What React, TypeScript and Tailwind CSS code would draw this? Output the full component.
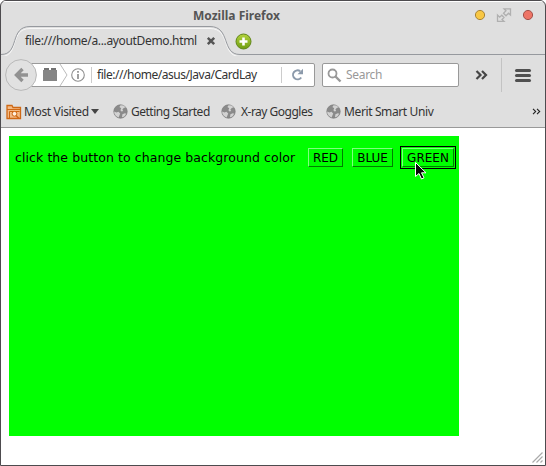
import React from 'react';

function Globe({ className }: { className: string }) {
  return (
    <svg className={`shrink-0 ${className}`} width="15" height="15" viewBox="0 0 15 15">
      <circle cx="7.5" cy="7.5" r="6.7" fill="#8a8a8a" stroke="#7c7c7c" strokeWidth="0.7" />
      <path d="M7.5 1.2 10.5 1.6 12.8 3.6 11 3.8 9.4 5.4 10.2 7 8.6 7.6 7.4 6.2 8.2 4.2 6.4 3Z" fill="#d2d2d2" />
      <path d="M1.2 7.5 3.5 8.4 5.4 7.8 7.2 9.4 6.4 11.6 5.6 13.4 3 12 1.4 9.6Z" fill="#d2d2d2" />
      <path d="M9.4 10.2 11.8 9.2 13.2 9.8 11.4 12.4 9 13.2Z" fill="#d2d2d2" />
    </svg>
  );
}

function AwtButton({ label, className }: { label: string; className: string }) {
  return (
    <button
      className={`flex h-[19px] items-center justify-center border border-t-[#80ff80] border-l-[#80ff80] border-r-[#008000] border-b-[#008000] bg-[#00ff00] pt-px text-[12px] leading-none whitespace-nowrap text-black ${className}`}
    >
      {label}
    </button>
  );
}

export default function App() {
  return (
    <div className="h-[466px] w-[546px] overflow-hidden bg-white font-['Noto_Sans',sans-serif] text-[12px] leading-[16px] text-[#333]">
      <div className="relative flex h-[466px] w-[546px] flex-col overflow-hidden rounded-t-[6px] border border-[#4d4b4e] bg-[#dfdfdf]">
        <header className="relative flex h-[24px] shrink-0 items-center border-t border-white">
          <span className="ml-[192px] mt-[5px] w-[88px] font-bold whitespace-nowrap text-[#555]">Mozilla Firefox</span>
          <svg className="mt-[4px] ml-[192px]" width="64" height="18" viewBox="0 0 64 18">
            <circle cx="7" cy="8" r="4.6" fill="#f8c744" stroke="#a88335" />
            <g fill="none" stroke="#b0b0b0" strokeWidth="1.3">
              <path d="M31 1.8H37.5V8L35.5 6.2 33 8.8 30.5 6.3 33 3.8Z" />
              <path d="M24.5 8V14.4H31L29 12.5 31 10.5 28.8 8.2 26.7 10.2Z" />
            </g>
            <circle cx="55" cy="8" r="4.6" fill="#ed7466" stroke="#a35048" />
          </svg>
        </header>

        <nav className="relative flex h-[31px] shrink-0 items-center">
          <svg className="absolute top-0 left-0" width="544" height="31" viewBox="0 0 544 31">
            <path d="M0 30.5C19 30.5 8 2.5 29 2.5H209C230 2.5 220 30.5 239 30.5H544" transform="translate(0 1)" fill="none" stroke="#f7f7f7" />
            <path d="M0 29.5C19 29.5 8 1.5 29 1.5H209C230 1.5 220 29.5 239 29.5H544" fill="none" stroke="#96999e" />
          </svg>
          <span className="relative ml-[24px] w-[174px] tracking-[-0.34px] whitespace-nowrap">file:///home/a...ayoutDemo.html</span>
          <svg className="relative mt-px ml-[7px]" width="10" height="10" viewBox="0 0 10 10">
            <path d="m1.8 1.8 6.4 6.4m0-6.4L1.8 8.2" stroke="#555" strokeWidth="2.5" />
          </svg>
          <svg className="relative mt-px ml-[19px]" width="17" height="17" viewBox="0 0 17 17">
            <defs>
              <linearGradient id="add" x2="0" y2="1"><stop stopColor="#b4d33d" /><stop offset="1" stopColor="#6f9d12" /></linearGradient>
            </defs>
            <circle cx="8.5" cy="8.5" r="7.5" fill="url(#add)" stroke="#61861b" />
            <path d="M8.5 4.5v8m-4-4h8" stroke="#fff" strokeWidth="2.6" />
          </svg>
        </nav>

        <div className="flex h-[40px] shrink-0 items-center pb-[2px]">
          <svg className="relative z-10 ml-[4px] shrink-0" width="32" height="34" viewBox="0 0 32 34">
            <circle cx="16" cy="17" r="15.4" fill="#e1e1e1" stroke="#b8b8b8" />
            <path d="M23 17H12m5.5-6L11.5 17l6 6" fill="none" stroke="#919191" strokeWidth="3.4" />
          </svg>
          <div className="ml-[-6px] flex h-[24px] w-[284px] shrink-0 items-center rounded-r-[2px] border border-[#999] bg-white">
            <svg className="shrink-0" width="62" height="22" viewBox="0 0 62 22">
              <path d="m28 0 7 11-7 11" fill="none" stroke="#bbb" />
              <path d="M11 6H25V17H11Z" fill="#858585" />
              <path d="M12 4h5v2h-5zm7 0h5v2h-5z" fill="#727272" />
              <circle cx="46" cy="11" r="6.3" fill="none" stroke="#8e8e8e" strokeWidth="1.1" />
              <path d="M46 10v5M46 7v1.8" stroke="#8e8e8e" strokeWidth="1.7" />
              <path d="M59.5 3v16" stroke="#ccc" />
            </svg>
            <span className="ml-[3px] w-[164px] shrink-0 tracking-[-0.47px] whitespace-nowrap">file:///home/asus/Java/CardLay</span>
            <svg className="ml-[20px] shrink-0" width="32" height="22" viewBox="0 0 32 22">
              <path d="M.5 3v16" stroke="#ccc" />
              <path d="M19.2 7.2A4.5 4.5 0 1 0 20.2 13.5" fill="none" stroke="#8c9aab" strokeWidth="2" />
              <path d="M22 4.8v5.5h-5.5Z" fill="#8c9aab" />
            </svg>
          </div>
          <div className="ml-[7px] flex h-[24px] w-[137px] shrink-0 items-center rounded-[2px] border border-[#999] bg-white">
            <svg className="ml-[4px]" width="15" height="15" viewBox="0 0 15 15">
              <circle cx="5.5" cy="5.5" r="4" fill="none" stroke="#999" strokeWidth="1.8" />
              <path d="m8.5 8.5 5 5" stroke="#999" strokeWidth="2.4" />
            </svg>
            <span className="ml-[4px] tracking-[-0.3px] text-[#999]">Search</span>
          </div>
          <svg className="ml-[16px] shrink-0" width="14" height="12" viewBox="0 0 14 12">
            <path d="m1.5 2 4 4-4 4m5.5-8 4 4-4 4" fill="none" stroke="#464646" strokeWidth="2.2" />
          </svg>
          <div className="ml-[12px] h-[34px] w-px bg-[#c3c3c3]" />
          <div className="ml-[13px] flex w-[16px] flex-col gap-[2px]">
            <i className="h-[3px] rounded-full bg-[#505050]" />
            <i className="h-[3px] rounded-full bg-[#505050]" />
            <i className="h-[3px] rounded-full bg-[#505050]" />
          </div>
        </div>

        <div className="flex h-[32px] shrink-0 items-center border-b border-[#999] whitespace-nowrap">
          <svg className="ml-[5px] shrink-0" width="16" height="16" viewBox="0 0 16 16">
            <path d="M1 14.5V1.5h5l1 2h7.5v11Z" fill="#f4ba84" stroke="#ce6814" strokeWidth="1.3" />
            <path d="M1 5.5h13M3.5 14V7.5h10" fill="none" stroke="#ce6814" />
            <circle cx="8.5" cy="9.8" r="2.4" fill="#fff0df" stroke="#ce6814" />
            <path d="m10 11.5 3 3" stroke="#ce6814" strokeWidth="1.5" />
          </svg>
          <span className="ml-[2px] w-[66px] tracking-[-0.35px]">Most Visited</span>
          <svg className="ml-px" width="8" height="5" viewBox="0 0 8 5"><path d="M0 0h8L4 5Z" fill="#444" /></svg>
          <Globe className="ml-[14px]" />
          <span className="ml-[3px] w-[81px] tracking-[-0.5px]">Getting Started</span>
          <Globe className="ml-[9px]" />
          <span className="ml-[5px] w-[74px] tracking-[-0.5px]">X-ray Goggles</span>
          <Globe className="ml-[11px]" />
          <span className="ml-[3px] w-[92px] tracking-[-0.38px]">Merit Smart Univ</span>
          <svg className="ml-[96px]" width="9" height="7" viewBox="0 0 9 7"><path d="m1 .8 2.7 2.7L1 6.2M5 .8l2.7 2.7L5 6.2" fill="none" stroke="#222" strokeWidth="1.1" /></svg>
        </div>

        <main className="relative flex-1 bg-white pt-[8px] pl-[8px]">
          <div className="flex h-[300px] w-[450px] items-start bg-[#00ff00] pt-[10px] font-['DejaVu_Sans',sans-serif]">
            <span className="mt-[4px] ml-[6px] w-[284px] text-[12.5px] tracking-[0.08px] whitespace-nowrap text-black">click the button to change background color</span>
            <AwtButton className="mt-[2px] ml-[9px] w-[35px]" label="RED" />
            <AwtButton className="mt-[2px] ml-[9px] w-[41px]" label="BLUE" />
            <div className="ml-[7px] border border-black p-px">
              <AwtButton className="w-[52px]" label="GREEN" />
            </div>
          </div>
          <svg className="absolute top-[33px] left-[413px]" width="14" height="20" viewBox="0 0 14 20">
            <path d="M1.5 1.5v14l3.5-3 2.5 5.5 2.5-1.2-2.5-5h4.5Z" fill="#080808" stroke="#fff" />
          </svg>
          <svg className="absolute right-[2px] bottom-[2px]" width="11" height="11" viewBox="0 0 11 11">
            <path d="M.5 10.5 10.5.5M4.5 10.5l6-6M8.5 10.5l2-2" stroke="#aaa" strokeWidth="1.2" />
          </svg>
        </main>
      </div>
    </div>
  );
}
